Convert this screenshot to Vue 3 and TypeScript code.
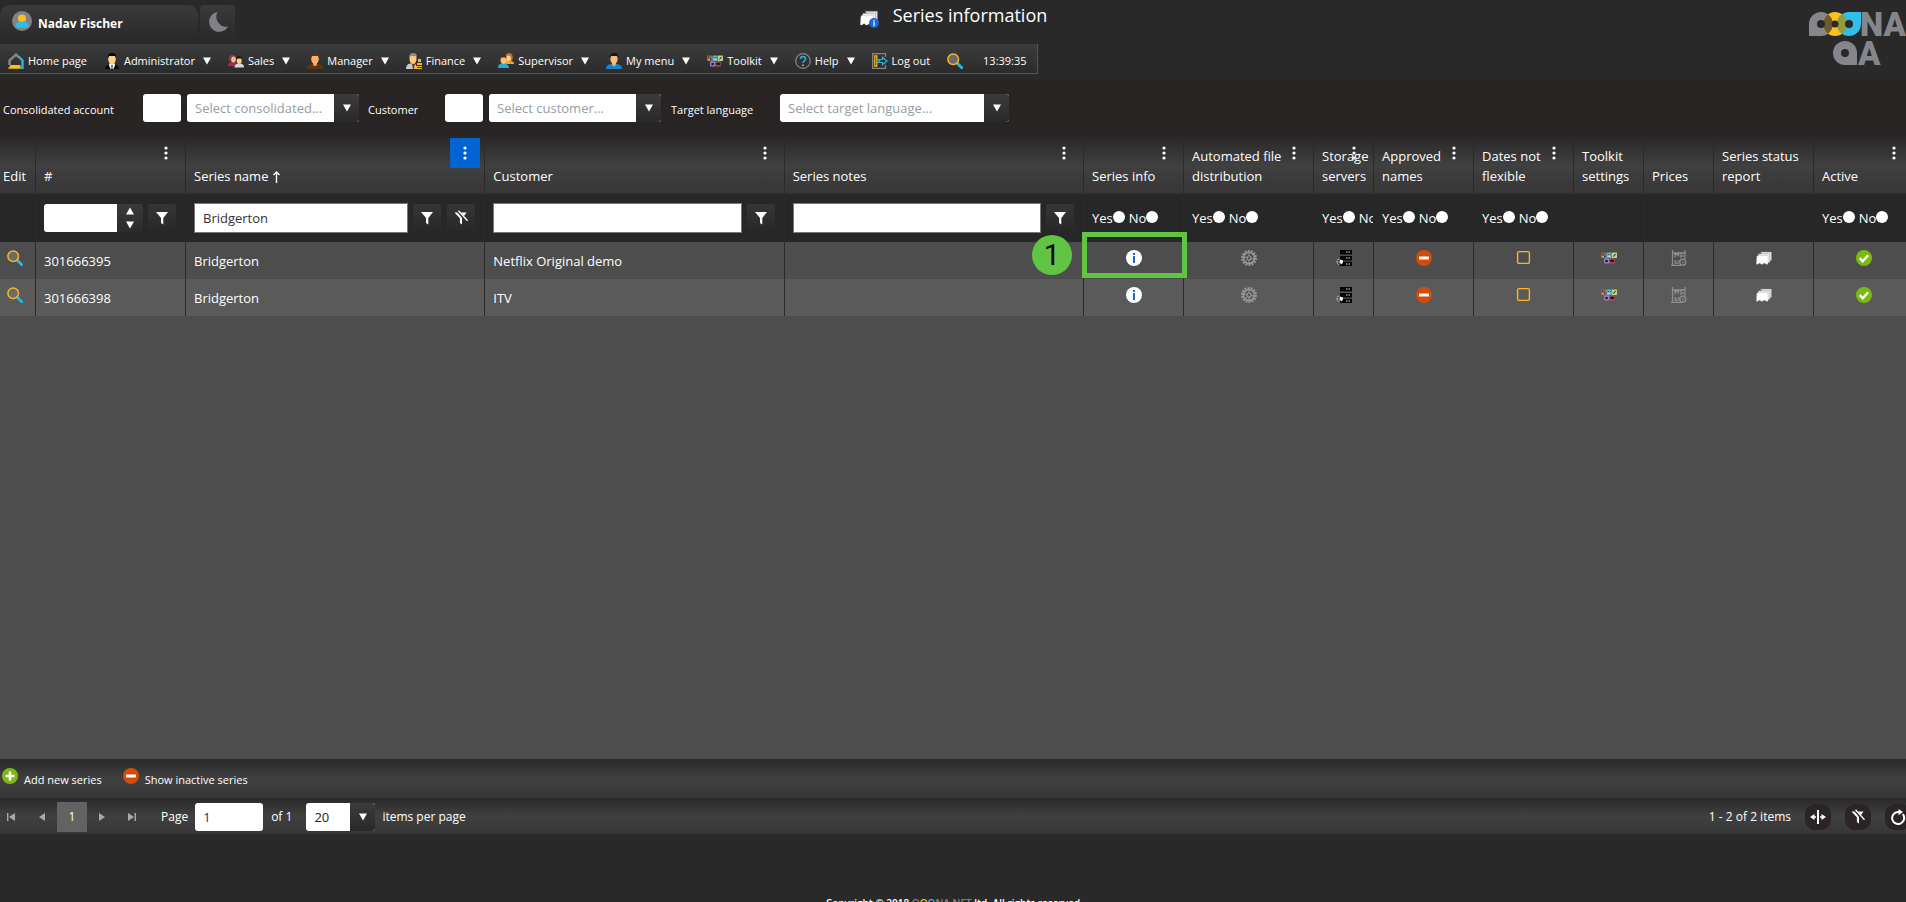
<script setup lang="ts">
import { ref } from 'vue'

interface MenuItem {
  label: string
  icon: string
  hasArrow: boolean
}

interface Column {
  key: string
  title: string
  width: string
  menu?: boolean
  filter?: 'number' | 'text' | 'yesno'
  clear?: boolean
  icon?: string
  sorted?: boolean
}

interface SeriesRow {
  id: string
  name: string
  customer: string
  notes: string
}

const menu: MenuItem[] = [
  { label: 'Home page', icon: 'home', hasArrow: false },
  { label: 'Administrator', icon: 'admin', hasArrow: true },
  { label: 'Sales', icon: 'sales', hasArrow: true },
  { label: 'Manager', icon: 'manager', hasArrow: true },
  { label: 'Finance', icon: 'finance', hasArrow: true },
  { label: 'Supervisor', icon: 'supervisor', hasArrow: true },
  { label: 'My menu', icon: 'user', hasArrow: true },
  { label: 'Toolkit', icon: 'toolkit', hasArrow: true },
  { label: 'Help', icon: 'help', hasArrow: true },
  { label: 'Log out', icon: 'logout', hasArrow: false },
]

const columns: Column[] = [
  { key: 'edit', title: 'Edit', width: 'w36' },
  { key: 'id', title: '#', width: 'w150', menu: true, filter: 'number' },
  { key: 'name', title: 'Series name', width: 'auto', menu: true, filter: 'text', clear: true, sorted: true },
  { key: 'customer', title: 'Customer', width: 'auto', menu: true, filter: 'text' },
  { key: 'notes', title: 'Series notes', width: 'auto', menu: true, filter: 'text' },
  { key: 'info', title: 'Series info', width: 'w100', menu: true, filter: 'yesno', icon: 'info' },
  { key: 'auto', title: 'Automated file distribution', width: 'w130', menu: true, filter: 'yesno', icon: 'gear' },
  { key: 'storage', title: 'Storage servers', width: 'w60', menu: true, filter: 'yesno', icon: 'servers' },
  { key: 'approved', title: 'Approved names', width: 'w100', menu: true, filter: 'yesno', icon: 'minus' },
  { key: 'dates', title: 'Dates not flexible', width: 'w100', menu: true, filter: 'yesno', icon: 'square' },
  { key: 'toolkit', title: 'Toolkit settings', width: 'w70', icon: 'toolkit' },
  { key: 'prices', title: 'Prices', width: 'w70', icon: 'prices' },
  { key: 'status', title: 'Series status report', width: 'w100', icon: 'series' },
  { key: 'active', title: 'Active', width: 'w100', menu: true, filter: 'yesno', icon: 'check' },
]

const rows: SeriesRow[] = [
  { id: '301666395', name: 'Bridgerton', customer: 'Netflix Original demo', notes: '' },
  { id: '301666398', name: 'Bridgerton', customer: 'ITV', notes: '' },
]

const filters = ref<Record<string, string>>({ id: '', name: 'Bridgerton', customer: '', notes: '' })
const account = ref('')
const customer = ref('')
const language = ref('')
const page = ref('1')
const pageSize = ref('20')

function cellText(row: SeriesRow, key: string): string {
  return (row as unknown as Record<string, string>)[key] ?? ''
}
</script>

<template>
  <div class="page">
    <svg class="sprite" aria-hidden="true">
      <symbol id="home" viewBox="0 0 16 16">
        <path d="M1.500 12V7.500L8 1.500l3 2.800" fill="none" stroke="#85868b" stroke-width="2.400" />
        <path d="M10.500 3.500L14.500 7.500V15h-2" fill="none" stroke="#27b5df" stroke-width="2.400" />
        <path d="M0 15.800L2.500 12H12.500v3.800z" fill="#fcc01e" />
      </symbol>
      <symbol id="admin" viewBox="0 0 16 16">
        <path d="M1 16c0-3 2-4 5-4.500h4c3 .5 5 1.500 5 4.500z" fill="#0b0b0b" />
        <path d="M5 10.500h6v2L9.500 16h-3L5 12.500z" fill="#eee" />
        <path d="M7.500 12h1v4h-1z" fill="#222" />
        <ellipse cx="8" cy="6" rx="3.800" ry="5.300" fill="#ffd08a" />
        <path d="M4 5C3.500 1.500 5.500 0 8 0s4.700 1 4 5l-1-2H5.200z" fill="#070707" />
      </symbol>
      <symbol id="sales" viewBox="0 0 16 16">
        <path d="M0 13c0-3 2-4 5-4s4 1 4 4z" fill="#a8285d" />
        <circle cx="4.500" cy="5.500" r="3.800" fill="#8a3b3d" />
        <ellipse cx="5.500" cy="6.500" rx="2.300" ry="3" fill="#f5b98b" />
        <path d="M6.500 14.500c0-3 2-4 5-4s4.500 1 4.500 4z" fill="#d8d8d8" />
        <ellipse cx="11.200" cy="7.500" rx="2.500" ry="3.500" fill="#ffc98c" />
        <path d="M8.500 7C8.200 4 9 3.200 11.200 3.200S14 4 13.900 7l-1-1.500H9.500z" fill="#1d1511" />
      </symbol>
      <symbol id="manager" viewBox="0 0 16 16">
        <path d="M0 16c0-3.500 2-4.500 5-5h6c3 .5 5 1.500 5 5z" fill="#5a3511" />
        <path d="M6 9h4v3l-2 1.500L6 12z" fill="#e99d55" />
        <ellipse cx="8" cy="6" rx="3.800" ry="5" fill="#f8b168" />
        <path d="M3.800 5C3.500 1.500 5 0 8 0s4.700 1 4.200 5l-1-2H5z" fill="#593417" />
      </symbol>
      <symbol id="finance" viewBox="0 0 16 16">
        <path d="M0 16c0-4 2-5 4-5.500h5l3 5.500z" fill="#c9c9c9" />
        <path d="M6 11l1 5h1l1-5z" fill="#444" />
        <ellipse cx="7" cy="6" rx="3.500" ry="4.800" fill="#ffca80" />
        <path d="M3.200 5C3 1.500 4.500 0 7 0s4.300 1 3.900 5l-1-2H4.500z" fill="#8c8c8c" />
        <path d="M12 6h3v3h-3zM11 10h5v2h-5zM8 13h8v1H8zM8 15h8v1H8z" fill="#eebc2b" />
      </symbol>
      <symbol id="supervisor" viewBox="0 0 16 16">
        <path d="M6 9c1-2 8-2 10 1v1H8z" fill="#f6a81e" />
        <ellipse cx="11" cy="4.500" rx="3.800" ry="4.500" fill="#c46d2e" />
        <ellipse cx="10.500" cy="5.500" rx="2.300" ry="3" fill="#ffd39a" />
        <path d="M0 15c0-3.500 2-4.500 5-4.500s6 1 6 4.500z" fill="#25a9dd" />
        <ellipse cx="5.500" cy="7" rx="3" ry="4" fill="#ffbe78" />
        <path d="M2.500 6C2.300 3 3.500 2 5.500 2s3.300 1 3 4l-1-1.500h-4z" fill="#4e2b1c" />
      </symbol>
      <symbol id="user" viewBox="0 0 16 16">
        <path d="M0 16c0-3.500 2-4.500 5-5h6c3 .5 5 1.500 5 5z" fill="#1583ce" />
        <path d="M6 9h4v3l-2 1.500L6 12z" fill="#eda96b" />
        <ellipse cx="8" cy="6" rx="3.600" ry="5" fill="#fbbd7d" />
        <path d="M3.800 5C3.500 1.500 5 0 8 0s4.700 1 4.200 5l-1-2H5z" fill="#22150f" />
      </symbol>
      <symbol id="toolkit" viewBox="0 0 16 16">
        <rect x="0" y="2.500" width="5.200" height="5.500" fill="#9a6346" />
        <rect x="5.400" y="2.500" width="5.200" height="5.500" rx="1" fill="#5fb0c4" />
        <rect x="10.800" y="2.500" width="5.200" height="5.500" fill="#b4d088" />
        <rect x="3" y="8.300" width="5.200" height="5.200" rx="1" fill="#9580ba" />
        <rect x="8.400" y="8.300" width="5.200" height="5.200" fill="#c05060" />
        <path d="M1 4h1M3 5.500l1 1.500M6.800 4.500h.8M9 4.500h.5M12.500 6.500l2-2.500M9.800 10h2.800v1.800H9.800zM4.800 10.500h1.600v1.200H4.800z" fill="#1b1b20" stroke="#1b1b20" stroke-width="1" />
        <path d="M6.500 6.300h3M1 6.800h2" stroke="#d6f0f4" stroke-width=".8" />
      </symbol>
      <symbol id="help" viewBox="0 0 16 16">
        <circle cx="8" cy="8" r="7.300" fill="none" stroke="#85868b" stroke-width="1.200" />
        <path d="M5.500 6C5.500 2.500 10.500 2.500 10.500 6c0 2-2.500 2-2.500 4" fill="none" stroke="#27b5df" stroke-width="1.500" />
        <path d="M7.200 11.500h1.600v1.600H7.200z" fill="#fcc01e" />
      </symbol>
      <symbol id="logout" viewBox="0 0 16 16">
        <path d="M13.500 4V.7H.7v14.600h12.800V12" fill="none" stroke="#85868b" stroke-width="1.300" />
        <path d="M2.800 2.800h2v10.400h-2z" fill="none" stroke="#fcc01e" stroke-width="1.200" />
        <path d="M6 6.500h4.500V4.300L15 8l-4.500 3.700V9.500H6l1.500-1.500z" fill="none" stroke="#27b5df" stroke-width="1.200" />
      </symbol>
      <symbol id="search" viewBox="0 0 16 16">
        <path d="M10.500 10.500l4.300 4.300" stroke="#27b5df" stroke-width="3" stroke-linecap="round" />
        <circle cx="6.200" cy="6.200" r="5.300" fill="#6b6b6b" stroke="#f5b820" stroke-width="1.500" />
      </symbol>
      <symbol id="series" viewBox="0 0 16 16">
        <path d="M4.500 2h11v8.500h-2V12h-1.500" fill="#e4e4e4" stroke="#888" stroke-width=".4" />
        <path d="M2.500 3.800h11.300v8.700H2.500z" fill="#f0f0f0" stroke="#888" stroke-width=".4" />
        <path d="M1.500 5.500h10.500v8.700h-2l-1-1h-1.200l-1 1H5l-1-1H3l-1 1H.3L.7 7z" fill="#fff" stroke="#999" stroke-width=".3" />
      </symbol>
      <symbol id="info" viewBox="0 0 16 16">
        <circle cx="8" cy="8" r="8" fill="#fff" />
        <path d="M7 3h2v2H7zM7 6h2v7H7z" fill="#1f64d8" />
      </symbol>
      <symbol id="gear" viewBox="0 0 16 16">
        <circle cx="8" cy="8" r="7" fill="none" stroke="#969696" stroke-width="2" stroke-dasharray="2 1.140" />
        <circle cx="8" cy="8" r="5.500" fill="none" stroke="#969696" stroke-width="1.600" />
        <circle cx="8" cy="8" r="2" fill="none" stroke="#969696" stroke-width="1.200" />
        <path d="M8 2.500v3.500M8 10v3.500M2.500 7l3.500.5M10 8.500l3.500.5M4 12l2.500-2.500" stroke="#969696" stroke-width="1" />
      </symbol>
      <symbol id="servers" viewBox="0 0 16 16">
        <path d="M4 0h12v4.500H4zM4 6h12v4.500H4zM4 11.700h12V16H4z" fill="#050505" />
        <path d="M10 2h1.500M12.500 2H14M10 8h1.500M12.500 8H14M10 14h1.500M12.500 14H14" stroke="#ddd" stroke-width="1.200" />
        <path d="M2.500 9C.5 10 .5 13 2.500 14.500" fill="none" stroke="#eee" stroke-width="1" stroke-dasharray="1.500 1" />
        <path d="M4 9.500l3 1v2L5.500 14.500 3.500 12.500z" fill="#eee" />
      </symbol>
      <symbol id="minus" viewBox="0 0 16 16">
        <circle cx="8" cy="8" r="8" fill="#d24b0a" />
        <rect x="3" y="6.500" width="10" height="3" rx=".5" fill="#fff" />
      </symbol>
      <symbol id="plus" viewBox="0 0 16 16">
        <circle cx="8" cy="8" r="8" fill="#7cba12" />
        <path d="M3.500 8h9M8 3.500v9" stroke="#fff" stroke-width="2.600" />
      </symbol>
      <symbol id="check" viewBox="0 0 16 16">
        <circle cx="8" cy="8" r="8" fill="#7cba12" />
        <path d="M3.700 8.200l3 3 5.500-6" fill="none" stroke="#fff" stroke-width="2.400" />
      </symbol>
      <symbol id="square" viewBox="0 0 16 16">
        <rect x="1.600" y="1.600" width="11.800" height="11.800" rx="1.500" fill="none" stroke="#f9b91e" stroke-width="1.400" />
      </symbol>
      <symbol id="prices" viewBox="0 0 16 16">
        <path d="M1.500 0v15.500M14 0v9M0 15.400h10" stroke="#8e8e8e" stroke-width="1.200" fill="none" />
        <path d="M1.500 3h12.500M4 7.500V4.500h3.500v2M10 3v5M12 5v2M3.500 11h2M7 11h1.500M3.500 13h4" stroke="#8e8e8e" stroke-width="1.300" fill="none" />
        <circle cx="11.800" cy="12.200" r="3" stroke="#8e8e8e" stroke-width="1.300" fill="none" />
        <path d="M12 11v2.500" stroke="#8e8e8e" stroke-width="1" />
      </symbol>
      <symbol id="funnel" viewBox="0 0 16 16">
        <path d="M2 2h12L9.300 8v6.500L7 13V8z" fill="#fff" />
      </symbol>
      <symbol id="funnel-clear" viewBox="0 0 16 16">
        <path d="M1.500 2.500h3l4.500 5.500v6.500L6.900 13V8.300zM8.200 2.500H13.500L11 6z" fill="#fff" />
        <path d="M5.500 .8l9 10" stroke="#fff" stroke-width="1.300" />
      </symbol>
      <symbol id="fit" viewBox="0 0 16 16">
        <path d="M7 1h2v14H7zM4.500 5v6L0 8zM11.500 5v6L16 8z" fill="#fff" />
        <path d="M3 8h3M10 8h3" stroke="#fff" stroke-width="1.500" />
      </symbol>
      <symbol id="reload" viewBox="0 0 16 16">
        <path d="M12.800 5.200A6 6 0 1 1 8 3h2" fill="none" stroke="#fff" stroke-width="2" />
        <path d="M8.500 0l4.500 3-4.500 3.200z" fill="#fff" />
      </symbol>
      <symbol id="caret" viewBox="0 0 8 8">
        <path d="M0 .5h8L4 7.500z" fill="currentColor" />
      </symbol>
    </svg>

    <header class="top">
      <div class="tab">
        <svg class="avatar" viewBox="0 0 20 20" aria-hidden="true">
          <circle cx="10" cy="10" r="10" fill="#818287" />
          <circle cx="10" cy="7.500" r="4" fill="#fcc01e" />
          <path d="M3.500 15.500c0-5 3.500-5 6.500-5s6.500 0 6.500 5c-2 2-11 2-13 0z" fill="#2fbde4" />
        </svg>
        <strong>Nadav Fischer</strong>
      </div>
      <button class="moon" aria-label="Dark mode">
        <svg viewBox="0 0 20 20" aria-hidden="true"><path d="M9.500 0A10 10 0 1 0 20 14.500 10 10 0 0 1 9.500 0z" fill="#818287" /></svg>
      </button>
      <h1 class="title">
        <span class="title-icon">
          <svg class="title-pic" aria-hidden="true"><use href="#series" /></svg>
          <svg class="title-badge" viewBox="0 0 16 16" aria-hidden="true">
            <circle cx="8" cy="8" r="8" fill="#1f64d8" />
            <path d="M7 3h2v2H7zM7 6h2v7H7z" fill="#fff" />
          </svg>
        </span>
        Series information
      </h1>
      <svg class="logo" viewBox="0 0 98 60" role="img" aria-label="OOONA QA">
        <path d="M1 26V14a12 12 0 1 1 12 12z" fill="#85868b" />
        <circle cx="27" cy="14" r="12" fill="#fcc01e" />
        <path d="M41 2h12v12a12 12 0 1 1-12-12z" fill="#2fbfe8" />
        <path d="M20 4.300a12 12 0 0 1 0 19.400 12 12 0 0 1 0-19.400z" fill="#6e5c30" />
        <path d="M34 4.300a12 12 0 0 1 0 19.400 12 12 0 0 1 0-19.400z" fill="#95993a" />
        <circle cx="13" cy="14" r="4" fill="#292929" />
        <circle cx="27" cy="14" r="3.500" fill="#292929" />
        <circle cx="41" cy="14" r="4" fill="#292929" />
        <path d="M49 55V43a12 12 0 1 0-12 12z" fill="#85868b" />
        <circle cx="37" cy="43" r="4" fill="#292929" />
        <text class="logo-text" x="52" y="26">NA</text>
        <text class="logo-text" x="50" y="55">A</text>
      </svg>
    </header>

    <nav class="menu">
      <a v-for="item in menu" :key="item.label" href="#" class="menu-item">
        <svg class="icon" aria-hidden="true"><use :href="'#' + item.icon" /></svg>
        <span class="menu-label">{{ item.label }}</span>
        <svg v-if="item.hasArrow" class="caret" aria-hidden="true"><use href="#caret" /></svg>
      </a>
      <button class="plain" aria-label="Search"><svg class="icon" aria-hidden="true"><use href="#search" /></svg></button>
      <time class="clock">13:39:35</time>
    </nav>

    <form class="filters" @submit.prevent>
      <label class="filter-label first" for="account">Consolidated account</label>
      <input class="box" aria-label="Consolidated account code">
      <span class="combo">
        <select id="account" v-model="account" class="placeholder">
          <option value="">Select consolidated...</option>
        </select>
        <span class="combo-btn"><svg class="caret" aria-hidden="true"><use href="#caret" /></svg></span>
      </span>
      <label class="filter-label second" for="customer">Customer</label>
      <input class="box" aria-label="Customer code">
      <span class="combo">
        <select id="customer" v-model="customer" class="placeholder">
          <option value="">Select customer...</option>
        </select>
        <span class="combo-btn"><svg class="caret" aria-hidden="true"><use href="#caret" /></svg></span>
      </span>
      <label class="filter-label third" for="language">Target language</label>
      <span class="combo wide">
        <select id="language" v-model="language" class="placeholder">
          <option value="">Select target language...</option>
        </select>
        <span class="combo-btn"><svg class="caret" aria-hidden="true"><use href="#caret" /></svg></span>
      </span>
    </form>

    <main class="grid">
      <table>
        <colgroup>
          <col v-for="c in columns" :key="c.key" :class="c.width">
        </colgroup>
        <thead>
          <tr class="heads">
            <th v-for="c in columns" :key="c.key" :class="{ narrow: c.key === 'edit' }" scope="col">
              {{ c.title }}<svg v-if="c.sorted" class="sort" viewBox="0 0 7 12" aria-hidden="true"><path d="M3.500 12V1.500M.5 4l3-3 3 3" fill="none" stroke="#fff" stroke-width="1.400" /></svg>
              <button v-if="c.menu" class="dots" :class="{ on: c.sorted }" :aria-label="c.title + ' menu'">
                <svg viewBox="0 0 4 14" aria-hidden="true"><circle cx="2" cy="2" r="1.600" /><circle cx="2" cy="7" r="1.600" /><circle cx="2" cy="12" r="1.600" /></svg>
              </button>
            </th>
          </tr>
          <tr class="filter-row">
            <td v-for="c in columns" :key="c.key">
              <div v-if="c.filter === 'number'" class="cell-filter">
                <span class="spin">
                  <input v-model="filters[c.key]" aria-label="Filter by number">
                  <button aria-label="Increase"><svg class="caret up" aria-hidden="true"><use href="#caret" /></svg></button>
                  <button aria-label="Decrease"><svg class="caret" aria-hidden="true"><use href="#caret" /></svg></button>
                </span>
                <button class="tool" aria-label="Filter"><svg class="icon" aria-hidden="true"><use href="#funnel" /></svg></button>
              </div>
              <div v-else-if="c.filter === 'text'" class="cell-filter">
                <input v-model="filters[c.key]" class="text" :aria-label="'Filter by ' + c.title">
                <button class="tool" aria-label="Filter"><svg class="icon" aria-hidden="true"><use href="#funnel" /></svg></button>
                <button v-if="c.clear" class="tool" aria-label="Clear"><svg class="icon" aria-hidden="true"><use href="#funnel-clear" /></svg></button>
              </div>
              <div v-else-if="c.filter === 'yesno'" class="yesno">
                <label>Yes<input type="radio" :name="c.key" value="yes"></label>
                <label>No<input type="radio" :name="c.key" value="no"></label>
              </div>
            </td>
          </tr>
        </thead>
        <tbody>
          <tr v-for="(row, i) in rows" :key="row.id">
            <td v-for="c in columns" :key="c.key" :class="{ iconic: c.icon, edit: c.key === 'edit' }">
              <button v-if="c.key === 'edit'" class="plain" aria-label="Edit"><svg class="icon" aria-hidden="true"><use href="#search" /></svg></button>
              <button v-else-if="c.icon" class="plain" :aria-label="c.title"><svg class="icon" aria-hidden="true"><use :href="'#' + c.icon" /></svg></button>
              <template v-else>{{ cellText(row, c.key) }}</template>
              <template v-if="c.key === 'info' && i === 0">
                <span class="marker-box"></span>
                <span class="marker">1</span>
              </template>
            </td>
          </tr>
        </tbody>
      </table>
    </main>

    <div class="toolbar">
      <button class="action"><svg class="icon" aria-hidden="true"><use href="#plus" /></svg><span>Add new series</span></button>
      <button class="action"><svg class="icon" aria-hidden="true"><use href="#minus" /></svg><span>Show inactive series</span></button>
    </div>

    <div class="pager">
      <button class="nav" aria-label="First page"><svg viewBox="0 0 8 8" aria-hidden="true"><path d="M0 0h1.400v8H0zM8 0v8L2 4z" /></svg></button>
      <button class="nav" aria-label="Previous page"><svg viewBox="0 0 8 8" aria-hidden="true"><path d="M7 0v8L1 4z" /></svg></button>
      <button class="nav current">1</button>
      <button class="nav" aria-label="Next page"><svg viewBox="0 0 8 8" aria-hidden="true"><path d="M1 0v8l6-4z" /></svg></button>
      <button class="nav" aria-label="Last page"><svg viewBox="0 0 8 8" aria-hidden="true"><path d="M6.600 0H8v8H6.600zM0 0v8l6-4z" /></svg></button>
      <label class="page-label" for="page">Page</label>
      <input id="page" v-model="page" class="box page-no">
      <span class="of">of 1</span>
      <span class="combo size">
        <select id="size" v-model="pageSize"><option>20</option></select>
        <span class="combo-btn"><svg class="caret" aria-hidden="true"><use href="#caret" /></svg></span>
      </span>
      <label class="per-page" for="size">items per page</label>
      <span class="total">1 - 2 of 2 items</span>
      <button class="round" aria-label="Fit columns"><svg class="icon" aria-hidden="true"><use href="#fit" /></svg></button>
      <button class="round" aria-label="Clear filters"><svg class="icon" aria-hidden="true"><use href="#funnel-clear" /></svg></button>
      <button class="round" aria-label="Refresh"><svg class="icon" aria-hidden="true"><use href="#reload" /></svg></button>
    </div>

    <footer class="foot">
      Copyright © 2018 <a href="#">O<span class="yellow">O</span><span class="blue">O</span>NA.NET</a> ltd. All rights reserved
    </footer>
  </div>
</template>

<style>
body {
  margin: 0;
  background: #292929;
}
</style>

<style scoped>
.page {
  display: flex;
  flex-direction: column;
  height: 100vh;
  overflow: hidden;
  background: #292929;
  color: #fff;
  font: 12px/16px "Open Sans", "Noto Sans", sans-serif;
}

.page * {
  box-sizing: border-box;
}

.sprite {
  position: absolute;
  width: 0;
  height: 0;
}

svg {
  display: block;
  flex: none;
}

button {
  display: flex;
  align-items: center;
  justify-content: center;
  padding: 0;
  border: 0;
  background: none;
  color: inherit;
  font: inherit;
}

input,
select {
  font: inherit;
}

a {
  color: inherit;
  text-decoration: none;
}

.icon {
  width: 16px;
  height: 16px;
}

.caret {
  width: 8px;
  height: 8px;
}

.caret.up {
  transform: rotate(180deg);
}

/* top bar */
.top {
  display: grid;
  grid-template-columns: 1fr auto 1fr;
  flex: none;
  position: relative;
  height: 44px;
}

.tab {
  display: flex;
  align-items: center;
  gap: 6px;
  grid-column: 1;
  grid-row: 1;
  width: 198px;
  height: 34px;
  margin-top: 5px;
  padding: 0 12px 3px;
  border-radius: 10px 10px 0 0;
  background: linear-gradient(#3a3a3a, #292929);
}

.tab strong {
  padding-top: 6px;
}

.avatar {
  width: 20px;
  height: 20px;
}

.moon {
  grid-column: 1;
  grid-row: 1;
  width: 35px;
  height: 34px;
  margin: 5px 0 0 200px;
  border-radius: 4px 4px 0 0;
  background: linear-gradient(#3a3a3a, #292929);
}

.moon svg {
  width: 20px;
  height: 20px;
}

.title {
  display: flex;
  grid-column: 2;
  grid-row: 1;
  gap: 14px;
  margin: 4px 0 0;
  font-size: 18px;
  font-weight: 400;
  line-height: 22px;
}

.title-icon {
  position: relative;
  width: 20px;
  padding-top: 5px;
}

.title-pic {
  width: 20px;
  height: 18px;
}

.title-badge {
  position: absolute;
  right: 0;
  top: 14px;
  width: 10px;
  height: 10px;
}

.logo {
  position: absolute;
  top: 10px;
  right: 0;
  width: 98px;
  height: 60px;
}

.logo-text {
  fill: #85868b;
  font: 900 33px Roboto, sans-serif;
}

/* main menu */
.menu {
  display: flex;
  flex: none;
  align-items: center;
  align-self: flex-start;
  gap: 17px;
  height: 30px;
  padding: 4px 10px 0 8px;
  border: solid #555;
  border-width: 0 1px 1px 0;
  background: linear-gradient(#3c3c3c, #2b2b2b);
  font-size: 11px;
}

.menu-item {
  display: flex;
  align-items: center;
  gap: 4px;
}

.menu-item .caret {
  margin-left: 4px;
}

.clock {
  margin-left: 3px;
}

/* lookup filters */
.filters {
  display: flex;
  flex: none;
  align-items: center;
  gap: 6px;
  height: 56px;
  margin-top: 6px;
  padding-left: 3px;
  background: #292424;
}

.filter-label {
  padding-top: 3px;
  font-size: 11px;
}

.first {
  width: 134px;
}

.second {
  width: 71px;
  margin-left: 3px;
}

.third {
  width: 103px;
  margin-left: 4px;
}

.box {
  width: 38px;
  height: 28px;
  padding: 0 8px;
  border: 0;
  border-radius: 3px;
  background: #fff;
  color: #333;
  font-size: 13px;
}

.combo {
  display: grid;
  grid-template-columns: 1fr 25px;
  width: 172px;
  height: 28px;
  overflow: hidden;
  border-radius: 3px;
}

.combo select {
  grid-column: 1 / 3;
  grid-row: 1;
  min-width: 0;
  padding: 0 28px 0 8px;
  border: 0;
  appearance: none;
  background: #fff;
  color: #222;
  font-size: 13px;
}

.combo select.placeholder {
  color: #9a9ba3;
}

.combo-btn {
  display: flex;
  z-index: 1;
  grid-column: 2;
  grid-row: 1;
  align-items: center;
  justify-content: center;
  background: linear-gradient(#3b3b3b, #292929);
  pointer-events: none;
}

.wide {
  width: 229px;
}

/* series grid */
.grid {
  flex: 1;
  min-height: 0;
  background: #4d4d4d;
}

table {
  width: calc(100% + 8px);
  border-collapse: separate;
  border-spacing: 0;
  table-layout: fixed;
  font-size: 13px;
  line-height: 20px;
}

.w36 { width: 36px; }
.w60 { width: 60px; }
.w70 { width: 70px; }
.w100 { width: 100px; }
.w130 { width: 130px; }
.w150 { width: 150px; }

th,
td {
  border-right: 1px solid #2a2a2a;
  text-align: left;
}

.heads {
  background: linear-gradient(#272727, #404040 50%, #383636);
}

th {
  position: relative;
  height: 58px;
  padding: 0 0 7px 8px;
  border-bottom: 1px solid #2f2f2f;
  font-weight: 400;
  vertical-align: bottom;
}

th.narrow {
  padding-left: 3px;
}

.sort {
  display: inline-block;
  width: 7px;
  height: 12px;
  margin-left: 5px;
  vertical-align: -2px;
}

.dots {
  position: absolute;
  top: 2px;
  right: 4px;
  width: 30px;
  height: 30px;
}

.dots.on {
  background: #0264d2;
}

.dots svg {
  width: 4px;
  height: 14px;
  fill: #fff;
}

.filter-row {
  background: #272727;
}

.filter-row td {
  height: 48px;
  padding: 0 9px 0 8px;
}

.cell-filter {
  display: flex;
  align-items: center;
  gap: 5px;
}

.spin {
  display: grid;
  flex: 1;
  grid-template: 14px 14px / 1fr 26px;
  overflow: hidden;
  border-radius: 3px;
  background: linear-gradient(#3a3a3a, #2b2b2b);
}

.spin input {
  grid-row: 1 / 3;
  min-width: 0;
  padding: 0 8px;
  border: 0;
  border-radius: 0;
}

.text {
  flex: 1;
  min-width: 0;
  height: 30px;
  padding: 0 8px;
  border: 1px solid #777;
  color: #333;
}

.tool {
  flex: none;
  width: 28px;
  height: 28px;
  border-radius: 3px;
  background: linear-gradient(#363636, #272727);
}

.cell-filter .tool + .tool {
  margin-left: 1px;
}

.yesno {
  display: flex;
  gap: 4px;
  overflow: hidden;
  margin-right: -9px;
}

.yesno label {
  display: flex;
  flex: none;
}

.yesno input {
  width: 12px;
  height: 12px;
  margin: 3px 0 0;
  border-radius: 50%;
  appearance: none;
  background: #fff;
}

tbody td {
  position: relative;
  height: 37px;
  padding: 0 8px;
}

tbody tr {
  background: #4d4d4d;
}

tbody tr:nth-child(2) {
  background: #5a5a5a;
}

.iconic .plain {
  margin: 0 auto 6px;
}

.edit .plain {
  margin: 0 0 6px;
}

td.edit {
  padding: 0 7px;
}

/* callout over the first info icon */
.marker-box {
  position: absolute;
  z-index: 2;
  inset: -10px -4px 1px -2px;
  border: 5px solid #61c445;
}

.marker {
  position: absolute;
  z-index: 2;
  top: -7px;
  left: -52px;
  width: 40px;
  height: 40px;
  border-radius: 50%;
  background: #61c445;
  color: #000;
  font: 29px/40px Roboto, sans-serif;
  text-align: center;
}

/* bottom bars */
.toolbar,
.pager {
  display: flex;
  flex: none;
  align-items: center;
  background: linear-gradient(#292929, #404040 50%, #363636);
}

.toolbar {
  gap: 21px;
  height: 39px;
  padding: 0 0 2px 2px;
  font-size: 11px;
}

.action {
  gap: 6px;
}

.action .icon {
  margin-bottom: 4px;
}

.action span {
  padding-top: 4px;
}

.pager {
  height: 36px;
  padding-top: 2px;
}

.nav {
  flex: none;
  width: 30px;
  height: 30px;
}

.nav svg {
  width: 8px;
  height: 8px;
  fill: #aaa;
}

.current {
  background: #626262;
}

.pager .nav:first-child {
  width: 27px;
  padding-right: 5px;
}

.page-label {
  margin: 0 7px 0 14px;
}

.page-no {
  width: 68px;
}

.of {
  margin: 0 14px 0 8px;
}

.size {
  width: 69px;
}

.per-page {
  margin-left: 7px;
}

.total {
  margin-left: auto;
}

.round {
  flex: none;
  width: 26px;
  height: 26px;
  margin-left: 14px;
  border-radius: 10px;
  background: #2b2424;
}

.round:last-child {
  margin-right: -5px;
}

.foot {
  flex: none;
  height: 68px;
  padding-top: 61px;
  font-size: 10px;
  font-weight: 600;
  text-align: center;
}

.foot a {
  color: #85868b;
}

.yellow {
  color: #fcc01e;
}

.blue {
  color: #2fbfe8;
}
</style>
